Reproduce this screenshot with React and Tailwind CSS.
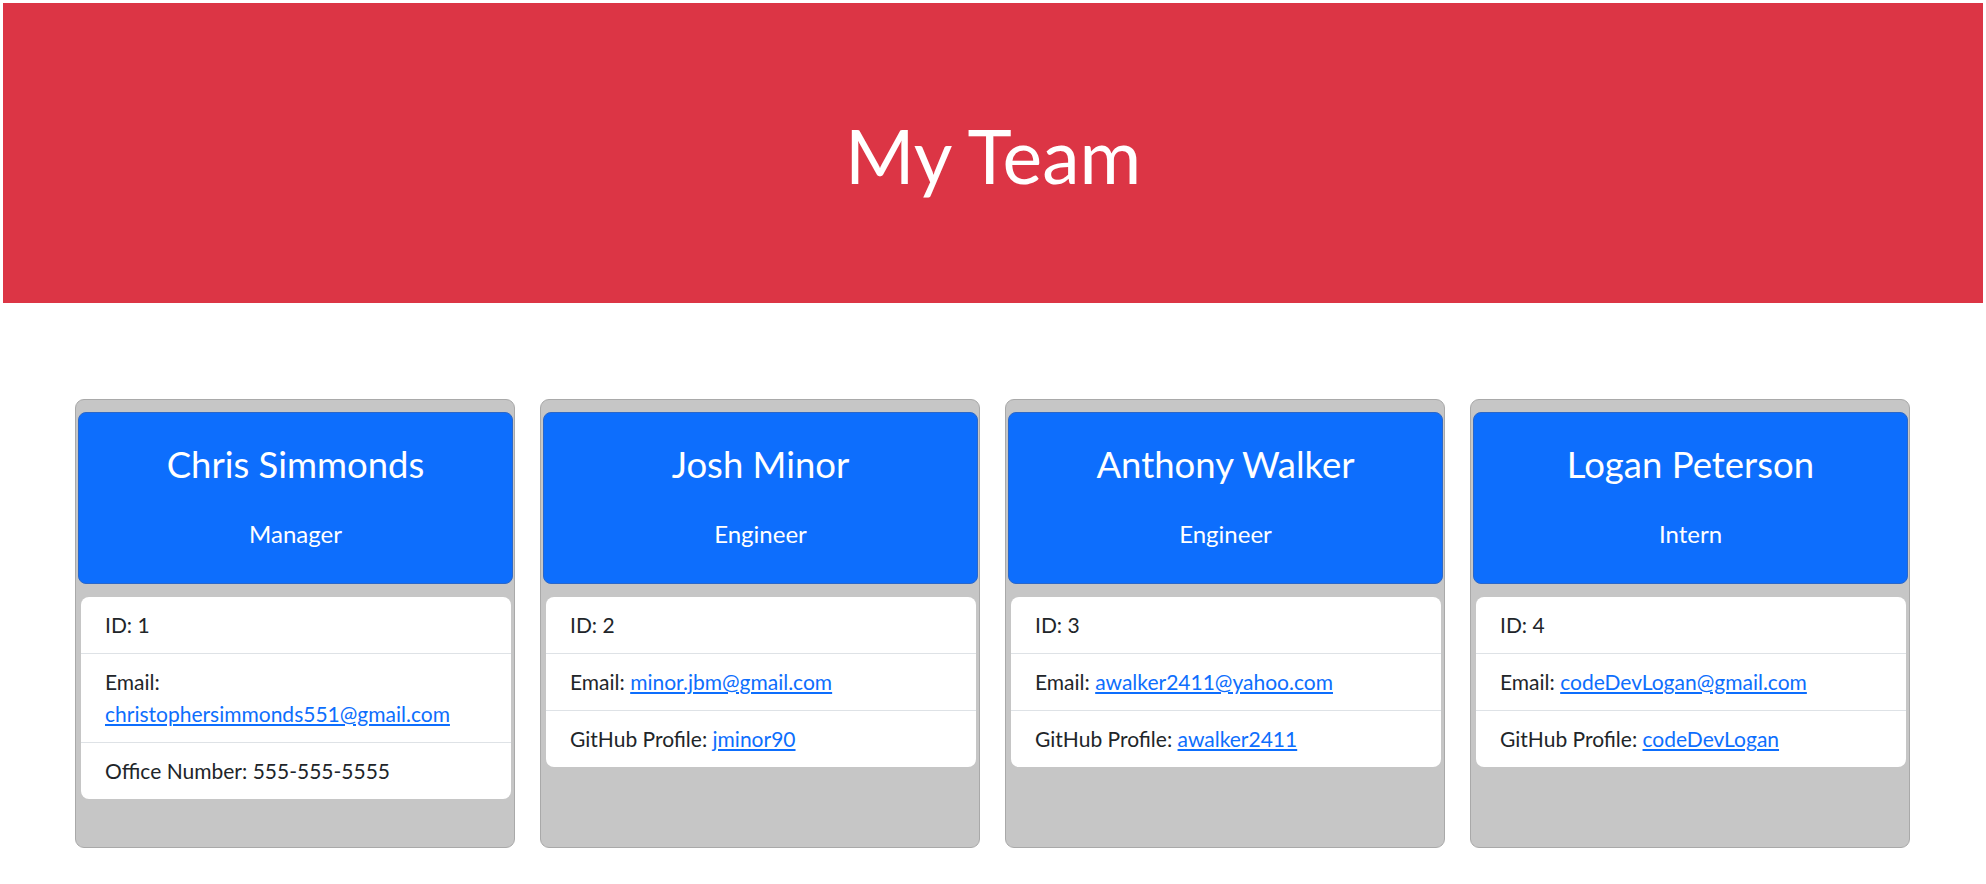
import React from "react";

const team = [
  {
    name: "Chris Simmonds",
    role: "Manager",
    id: 1,
    email: "christophersimmonds551@gmail.com",
    extra: { label: "Office Number", value: "555-555-5555" },
  },
  {
    name: "Josh Minor",
    role: "Engineer",
    id: 2,
    email: "minor.jbm@gmail.com",
    extra: { label: "GitHub Profile", value: "jminor90", link: true },
  },
  {
    name: "Anthony Walker",
    role: "Engineer",
    id: 3,
    email: "awalker2411@yahoo.com",
    extra: { label: "GitHub Profile", value: "awalker2411", link: true },
  },
  {
    name: "Logan Peterson",
    role: "Intern",
    id: 4,
    email: "codeDevLogan@gmail.com",
    extra: { label: "GitHub Profile", value: "codeDevLogan", link: true },
  },
];

function MemberCard({ member }) {
  return (
    <div className="flex flex-col bg-[#c6c6c6] border border-[#a9a9a9] rounded-[9px] pt-[12px] pb-[48px]">
      {/* header */}
      <div className="ml-[2px] mr-[1px] h-[172px] bg-[#0d6efd] border border-[#2a67c9] rounded-[8px] text-white text-center pt-[28px]">
        <h2 className="text-[36.5px] leading-[46px]">{member.name}</h2>
        <h5 className="text-[24px] leading-[28px] mt-[33px]">{member.role}</h5>
      </div>

      {/* details */}
      <ul className="mt-[13px] ml-[5px] mr-[3px] bg-white rounded-[8px] text-[21px] leading-8 text-[#212529] divide-y divide-[#dee2e6]">
        <li className="px-6 py-3">ID: {member.id}</li>
        <li className="px-6 py-3">
          Email:{" "}
          <a href={`mailto:${member.email}`} className="text-[#0d6efd] underline">
            {member.email}
          </a>
        </li>
        <li className="px-6 py-3">
          {member.extra.label}:{" "}
          {member.extra.link ? (
            <a href="#" className="text-[#0d6efd] underline">
              {member.extra.value}
            </a>
          ) : (
            member.extra.value
          )}
        </li>
      </ul>
    </div>
  );
}

export default function App() {
  return (
    <main className="min-h-screen bg-white font-['Lato',sans-serif]">
      <div className="p-[3px]">
        <header className="h-[300px] bg-[#dc3545] flex items-center justify-center pt-[4px]">
          <h1 className="text-white text-[75px] leading-none">My Team</h1>
        </header>
      </div>

      <section className="grid grid-cols-4 gap-[25px] pl-[75px] pr-[76px] mt-[93px]">
        {team.map((m) => (
          <MemberCard key={m.id} member={m} />
        ))}
      </section>
    </main>
  );
}
